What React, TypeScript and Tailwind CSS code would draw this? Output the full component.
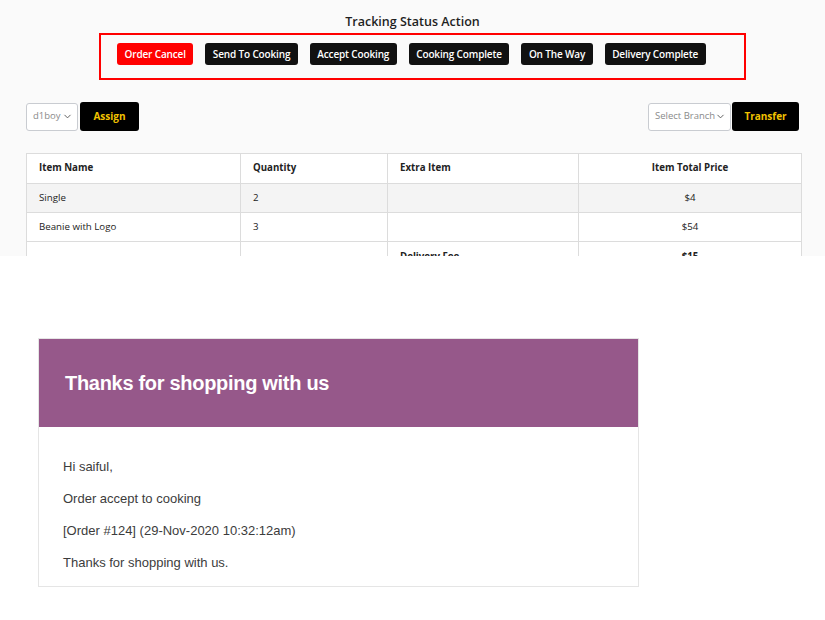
import { ChevronDown } from "lucide-react";

const ACTIONS = [
  { label: "Order Cancel", danger: true },
  { label: "Send To Cooking" },
  { label: "Accept Cooking" },
  { label: "Cooking Complete" },
  { label: "On The Way" },
  { label: "Delivery Complete" },
];

const ROWS = [
  { name: "Single", qty: "2", extra: "", price: "$4" },
  { name: "Beanie with Logo", qty: "3", extra: "", price: "$54" },
];

const EMAIL_LINES = [
  "Hi saiful,",
  "Order accept to cooking",
  "[Order #124] (29-Nov-2020 10:32:12am)",
  "Thanks for shopping with us.",
];

function SelectBox({ label, width }: { label: string; width: string }) {
  return (
    <div
      className={`flex h-[28px] ${width} items-center justify-between whitespace-nowrap rounded-[3px] border border-[#c9ccd1] bg-white pl-[6px] pr-[4px] text-[9.5px] text-[#8a8a8a]`}
    >
      <span>{label}</span>
      <ChevronDown className="h-[11px] w-[11px] shrink-0 text-[#555]" strokeWidth={2} />
    </div>
  );
}

function TrackingPanel() {
  return (
    // cropped screenshot of the admin panel — cut off mid-table
    <section
      className="h-[256px] overflow-hidden bg-[#fafafa] px-[26px] pt-[13px] text-[#222]"
      style={{ fontFamily: '"Open Sans", "Noto Sans", sans-serif' }}
    >
      <h2 className="text-center text-[12.5px] leading-[18px] font-semibold text-[#1f1f1f]">
        Tracking Status Action
      </h2>

      <div className="ml-[73px] mt-[2px] flex h-[47px] w-[647px] items-start gap-[12px] border-2 border-[#ff0000] pl-[16px] pt-[8px]">
        {ACTIONS.map((a) => (
          <button
            key={a.label}
            className={`h-[22px] whitespace-nowrap rounded-[3px] px-[7.5px] text-[10px] font-semibold tracking-[-0.15px] ${
              a.danger ? "bg-[#ff0000] text-white" : "bg-[#111111] text-white"
            }`}
          >
            {a.label}
          </button>
        ))}
      </div>

      <div className="mt-[22px] flex items-center justify-between">
        <div className="flex items-center gap-[2px]">
          <SelectBox label="d1boy" width="w-[52px]" />
          <button className="h-[29px] w-[59px] rounded-[3px] bg-black text-[10px] font-bold text-[#f2c200]">
            Assign
          </button>
        </div>
        <div className="flex items-center gap-[1px]">
          <SelectBox label="Select Branch" width="w-[83px]" />
          <button className="h-[29px] w-[67px] rounded-[3px] bg-black text-[10px] font-bold text-[#f2c200]">
            Transfer
          </button>
        </div>
      </div>

      <table className="mt-[22px] w-[775px] table-fixed border-collapse text-[9.7px]">
        <colgroup>
          <col className="w-[214px]" />
          <col className="w-[147px]" />
          <col className="w-[191px]" />
          <col className="w-[223px]" />
        </colgroup>
        <thead>
          <tr className="h-[30px] bg-white font-bold">
            <th className="border border-[#dcdcdc] pl-[12px] text-left">Item Name</th>
            <th className="border border-[#dcdcdc] pl-[12px] text-left">Quantity</th>
            <th className="border border-[#dcdcdc] pl-[12px] text-left">Extra Item</th>
            <th className="border border-[#dcdcdc] text-center">Item Total Price</th>
          </tr>
        </thead>
        <tbody>
          {ROWS.map((r, i) => (
            <tr key={r.name} className={`h-[29px] ${i % 2 === 0 ? "bg-[#f4f4f4]" : "bg-white"}`}>
              <td className="border border-[#dcdcdc] pl-[12px]">{r.name}</td>
              <td className="border border-[#dcdcdc] pl-[12px]">{r.qty}</td>
              <td className="border border-[#dcdcdc] pl-[12px]">{r.extra}</td>
              <td className="border border-[#dcdcdc] text-center">{r.price}</td>
            </tr>
          ))}
          <tr className="h-[29px] bg-white font-bold">
            <td className="border border-[#dcdcdc]"></td>
            <td className="border border-[#dcdcdc]"></td>
            <td className="border border-[#dcdcdc] pl-[12px] pt-[2px]">Delivery Fee</td>
            <td className="border border-[#dcdcdc] pt-[2px] text-center">$15</td>
          </tr>
        </tbody>
      </table>
    </section>
  );
}

function EmailCard() {
  return (
    <section
      className="bg-white pb-[35px] pl-[38px] pt-[82px]"
      style={{ fontFamily: '"Liberation Sans", Arial, sans-serif' }}
    >
      <div className="w-[601px] border border-[#e5e5e5]">
        <div className="flex h-[88px] items-center bg-[#96588a] pl-[26px]">
          <h1 className="text-[20px] font-bold tracking-[-0.3px] text-white">
            Thanks for shopping with us
          </h1>
        </div>
        <div className="flex flex-col gap-[16px] px-[24px] pb-[15px] pt-[32px] text-[13px] leading-[16px] text-[#3c3c3c]">
          {EMAIL_LINES.map((line) => (
            <p key={line}>{line}</p>
          ))}
        </div>
      </div>
    </section>
  );
}

export default function App() {
  return (
    <div className="h-[620px] w-[825px] overflow-hidden bg-white">
      <TrackingPanel />
      <EmailCard />
    </div>
  );
}
